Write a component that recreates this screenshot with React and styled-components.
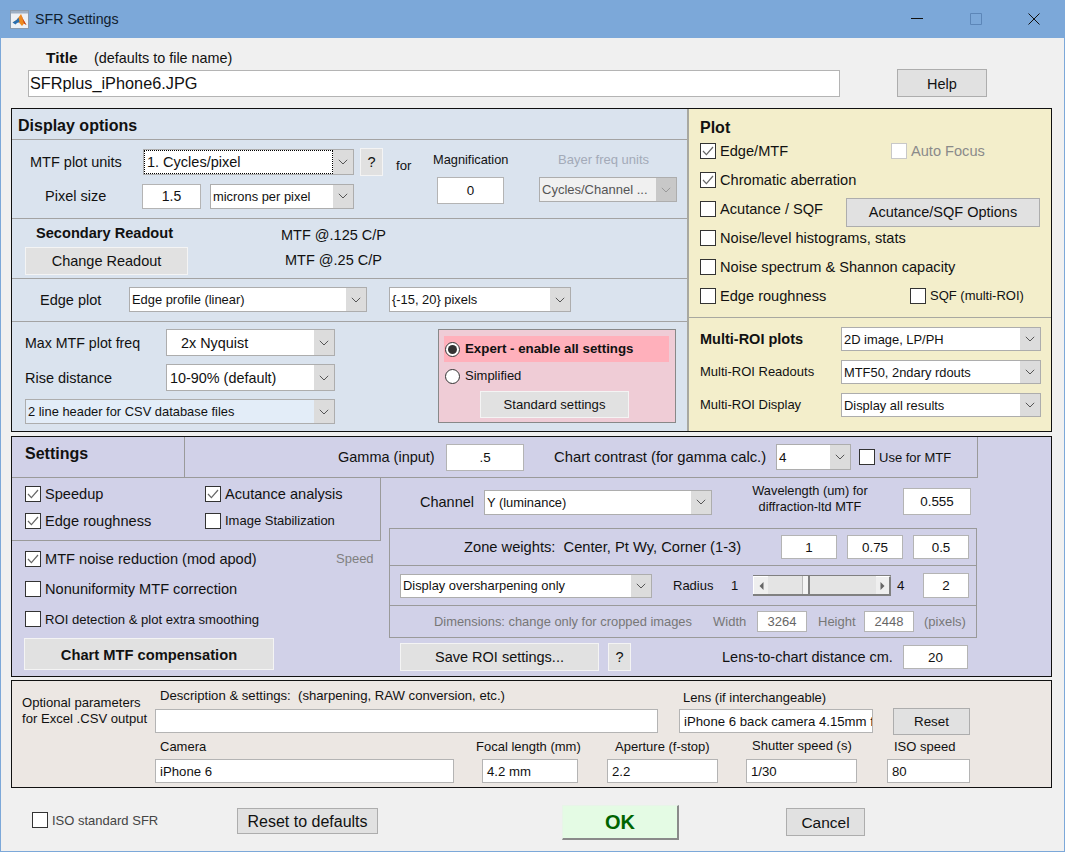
import React from 'react';
import styled, { createGlobalStyle, css } from 'styled-components';

const GlobalStyle = createGlobalStyle`
  html, body {
    margin: 0;
    padding: 0;
    background: #f0f0f0;
    font-family: "Liberation Sans", Arial, sans-serif;
    color: #111;
  }
  * { box-sizing: border-box; }
`;

// every control in this dialog has a fixed size, and an offset from its neighbour
const spot = css`
  flex: none;
  margin-left: ${p => p.$ml || 0}px;
  margin-top: ${p => p.$mt || 0}px;
  ${p => p.$w && `width: ${p.$w}px;`}
  ${p => p.$h && `height: ${p.$h}px;`}
`;

const Window = styled.div`
  width: 1065px;
  height: 852px;
  overflow: hidden;
  background: #f0f0f0;
  border: 1px solid #7ca8d9;
  border-top: 0;
`;

const TitleBar = styled.div`
  height: 38px;
  margin: 0 -1px;
  padding: 0 25px 0 10px;
  display: flex;
  align-items: center;
  background: #7ca8d9;
  font-size: 14.2px;
  color: #10202f;
`;

const TitleText = styled.span`
  margin-left: 6px;
`;

const WindowControls = styled.div`
  margin-left: auto;
  display: flex;
  align-items: center;
  gap: 46.5px;
`;

const Row = styled.div`
  display: flex;
  align-items: ${p => p.$align || 'center'};
  ${spot}
`;

const Col = styled.div`
  display: flex;
  flex-direction: column;
  align-items: flex-start;
  ${spot}
`;

const Text = styled.span`
  display: block;
  ${spot}
  font-size: ${p => p.$size || 14.5}px;
  font-weight: ${p => (p.$bold ? 700 : 400)};
  color: ${p => p.$color || '#111'};
  text-align: ${p => p.$align || 'left'};
  line-height: ${p => p.$lh || 18}px;
  white-space: pre;
`;

const Field = styled.div`
  ${spot}
  display: flex;
  align-items: center;
  justify-content: ${p => (p.$left ? 'flex-start' : 'center')};
  padding-left: ${p => (p.$left ? p.$pad ?? 4 : 0)}px;
  overflow: hidden;
  background: #fff;
  border: 1px solid #b4b4b4;
  font-size: ${p => p.$size || 13.4}px;
  color: ${p => p.$color || '#111'};
  white-space: nowrap;
`;

const Button = styled.div`
  ${spot}
  display: flex;
  align-items: center;
  justify-content: center;
  padding-top: ${p => p.$pt || 0}px;
  background: #e1e1e1;
  border: 1px solid ${p => (p.$light ? '#f4f4f4' : '#adadad')};
  font-size: ${p => p.$size || 14.5}px;
  font-weight: ${p => (p.$bold ? 700 : 400)};
  color: #111;
  white-space: nowrap;
`;

const OkButton = styled(Button)`
  background: #e4fbe4;
  border: 1px solid #e8f4e8;
  border-right: 2px solid #8a8a8a;
  border-bottom: 2px solid #8a8a8a;
  font-size: 20px;
  font-weight: 700;
  color: #006400;
`;

const SelectBox = styled.div`
  ${spot}
  display: flex;
  background: ${p => (p.$disabled ? '#f0f0f0' : p.$bg || '#fff')};
  border: 1px solid #adadad;
  font-size: ${p => p.$size || 12.9}px;
  color: ${p => (p.$disabled ? '#555' : '#111')};
  white-space: nowrap;
`;

const SelectValue = styled.div`
  flex: 1;
  min-width: 0;
  display: flex;
  align-items: center;
  padding-left: ${p => p.$pad ?? 2}px;
  ${p => p.$focus && 'outline: 1px dotted #000; outline-offset: -1px;'}
`;

const SelectArrow = styled.div`
  flex: none;
  width: 20px;
  display: flex;
  align-items: center;
  justify-content: center;
  background: ${p => (p.$disabled ? '#c8c8c8' : '#dcdcdc')};
`;

const Select = ({ children, pad, focus, ...rest }) => (
  <SelectBox {...rest}>
    <SelectValue $pad={pad} $focus={focus}>{children}</SelectValue>
    <SelectArrow $disabled={rest.$disabled}>
      <svg width="10" height="6" viewBox="0 0 10 6" fill="none" stroke={rest.$disabled ? '#999' : '#555'}>
        <path d="M.8.8 5 5 9.2.8" />
      </svg>
    </SelectArrow>
  </SelectBox>
);

const CheckItem = styled.div`
  ${spot}
  display: flex;
  align-items: center;
  gap: 4px;
  font-size: ${p => p.$size || 14.6}px;
  color: ${p => p.$color || '#111'};
  white-space: nowrap;
`;

const CheckBox = styled.div`
  flex: none;
  width: 16px;
  height: 16px;
  display: flex;
  align-items: center;
  justify-content: center;
  background: #fff;
  border: 1px solid ${p => (p.$off ? '#c8c8c8' : '#333')};
`;

const Check = ({ on, off, children, ...rest }) => (
  <CheckItem {...rest}>
    <CheckBox $off={off}>
      {on && (
        <svg width="12" height="10" viewBox="0 0 12 10" fill="none" stroke="#666" strokeWidth="1.2">
          <path d="M1 5l3.400 3.600L11 1" />
        </svg>
      )}
    </CheckBox>
    {children}
  </CheckItem>
);

const RadioCircle = styled.div`
  flex: none;
  width: 15px;
  height: 15px;
  display: flex;
  align-items: center;
  justify-content: center;
  border-radius: 50%;
  background: #fff;
  border: 1px solid #333;
`;

const RadioDot = styled.div`
  width: 9px;
  height: 9px;
  border-radius: 50%;
  background: #333;
`;

const Panel = styled.div`
  ${spot}
  width: 1041px;
  border: 1px solid #111;
  background: ${p => p.$bg};
`;

const DisplayGrid = styled.div`
  display: grid;
  grid-template-columns: 675px 1fr;
  height: 322px;
`;

const DisplayArea = styled.div`
  background: #dae3ee;
`;

const Section = styled.div`
  display: flex;
  align-items: flex-start;
  height: ${p => p.$h}px;
  ${p => !p.$last && 'border-bottom: 1px solid #a3a3a3;'}
`;

const PlotArea = styled.div`
  background: #f3eecb;
  border-left: 2px solid #a8a8a0;
`;

const PlotChecks = styled.div`
  height: 209px;
  padding: 9px 0 0 11px;
  border-bottom: 1px solid #a8a8a0;
`;

const PlotRow = styled.div`
  display: flex;
  align-items: center;
  height: 29px;
`;

const PlotSelects = styled.div`
  padding: 9px 0 0 11px;
`;

const ExpertBox = styled.div`
  ${spot}
  width: 238px;
  height: 94px;
  padding: 6px 0 0 5px;
  background: #efccd6;
  border: 1px solid #888;
`;

const ExpertStrip = styled.div`
  display: flex;
  align-items: center;
  gap: 5px;
  width: 225px;
  height: 26px;
  padding-left: 1px;
  background: ${p => (p.$on ? '#ffb0bb' : 'transparent')};
  ${p => !p.$on && 'margin-top: 4px; height: 20px;'}
`;

const TopRow = styled.div`
  display: flex;
  width: 966px;
  height: 41px;
  border-bottom: 1px solid #9a9a9a;
`;

const SettingsHead = styled.div`
  width: 173px;
  padding: 7px 0 0 13px;
  border-right: 1px solid #9a9a9a;
`;

const GammaBar = styled.div`
  flex: 1;
  display: flex;
  align-items: center;
  border-right: 1px solid #9a9a9a;
`;

const SettingsBody = styled.div`
  display: flex;
  align-items: flex-start;
`;

const CheckGroup = styled.div`
  display: grid;
  grid-template-columns: 180px 1fr;
  grid-auto-rows: 27px;
  align-items: center;
  width: 369px;
  height: 63px;
  padding: 2px 0 0 13px;
  border-right: 1px solid #9a9a9a;
  border-bottom: 1px solid #9a9a9a;
`;

const LeftRows = styled.div`
  padding: 3px 0 0 13px;
`;

const OptionRow = styled.div`
  display: flex;
  align-items: center;
  height: 30px;
`;

const ZoneBox = styled.div`
  ${spot}
  width: 588px;
  border: 1px solid #9a9a9a;
`;

const ZoneRow = styled.div`
  display: flex;
  align-items: center;
  height: ${p => p.$h}px;
  ${p => !p.$last && 'border-bottom: 1px solid #9a9a9a;'}
`;

const Slider = styled.div`
  ${spot}
  display: flex;
  align-items: stretch;
  background: #e4e4e4;
  border-top: 1px solid #808080;
  border-bottom: 2px solid #808080;
`;

const SliderArrow = styled.div`
  width: 15px;
  flex: none;
  display: flex;
  align-items: center;
  justify-content: center;
  background: #efefef;
  border-top: 1px solid #fff;
  ${p => (p.$end ? 'border-right: 2px solid #808080;' : 'border-left: 1px solid #fff;')}
`;

const SliderThumb = styled.div`
  width: 8px;
  flex: none;
  margin-left: 34px;
  background: #f4f4f4;
  border-left: 1px solid #bbb;
  border-right: 2px solid #808080;
`;

const SliderRest = styled.div`
  flex: 1;
`;

const OptionalLead = styled.div`
  width: 143px;
  flex: none;
  padding: 14px 0 0 10px;
`;

const Footer = styled.div`
  display: flex;
  align-items: flex-start;
  margin-top: 17px;
`;

const MatlabIcon = () => (
  <svg width="19" height="19" viewBox="0 0 19 19">
    <rect x=".5" y=".5" width="18" height="18" fill="#eef1f5" stroke="#8b9bad" />
    <rect x="1" y="1" width="17" height="2.500" fill="#9fb0c4" />
    <path d="M2.500 12.500l4-2.500 2-2.500 2.500-3.500 2 5 3.500 6-2.500-1.500-2 2.500-3-3.500-2-.5z" fill="#ee8a1e" />
    <path d="M2.500 12.500l4-2.500 2-2.500 1 4.500-2.500 1-1.500 1.500z" fill="#2a6fb0" />
    <path d="M11 4l2 5 3.500 6-2.500-1.500-1.500-5z" fill="#c8401a" />
  </svg>
);

const Minimize = () => (
  <svg width="12" height="12" viewBox="0 0 12 12" stroke="#111"><path d="M0 5.500h12" /></svg>
);
const Maximize = () => (
  <svg width="12" height="12" viewBox="0 0 12 12" fill="none" stroke="#5c86b8"><path d="M.5.500h11v11H.5z" /></svg>
);
const Close = () => (
  <svg width="12" height="12" viewBox="0 0 12 12" stroke="#111"><path d="M.5.500l11 11M11.500.500l-11 11" /></svg>
);

const LabeledField = ({ label, labelSize = 13, labelMl, labelMt = 0, fieldMt = 3, w, ml, value }) => (
  <Col $ml={ml} $w={w}>
    <Text $size={labelSize} $lh={16} $ml={labelMl} $mt={labelMt}>{label}</Text>
    <Field $w={w} $h={24} $mt={fieldMt} $left $size={13.2}>{value}</Field>
  </Col>
);

const App = () => {
  return (
    <Window>
      <GlobalStyle />
      <TitleBar>
        <MatlabIcon />
        <TitleText>SFR Settings</TitleText>
        <WindowControls>
          <Minimize />
          <Maximize />
          <Close />
        </WindowControls>
      </TitleBar>

      <Row $mt={10} $ml={45} $h={20}>
        <Text $size={15.5} $bold $w={48}>Title</Text>
        <Text $size={14.4}>(defaults to file name)</Text>
      </Row>
      <Row $mt={1} $ml={27} $h={28}>
        <Field $w={812} $h={27} $mt={1} $left $pad={1} $size={16.3}>SFRplus_iPhone6.JPG</Field>
        <Button $ml={57} $w={90} $h={28} $pt={1}>Help</Button>
      </Row>

      <Panel $ml={10} $mt={11} $bg="#dae3ee">
        <DisplayGrid>
          <DisplayArea>
            <Section $h={31}>
              <Text $size={16} $bold $lh={20} $ml={6} $mt={7}>Display options</Text>
            </Section>

            <Section $h={79}>
              <Col $w={371} $mt={8}>
                <Row $h={28}>
                  <Text $ml={18} $w={113}>MTF plot units</Text>
                  <Select $w={211} $h={26} focus pad={3} $size={14.5}>1. Cycles/pixel</Select>
                  <Button $light $ml={6} $w={23} $h={28}>?</Button>
                </Row>
                <Row $h={26} $mt={7}>
                  <Text $ml={33} $w={97}>Pixel size</Text>
                  <Field $w={59} $h={25} $size={14}>1.5</Field>
                  <Select $ml={9} $w={144} $h={25}>microns per pixel</Select>
                </Row>
              </Col>
              <Text $size={13.2} $ml={13} $mt={17} $w={14}>for</Text>
              <Col $ml={23} $w={76} $mt={12}>
                <Text $size={12.8} $lh={16}>Magnification</Text>
                <Field $ml={4} $mt={9} $w={67} $h={27}>0</Field>
              </Col>
              <Col $ml={30} $w={138} $mt={12}>
                <Text $size={13} $lh={16} $ml={19} $color="#a3aab8">Bayer freq units</Text>
                <Select $mt={9} $w={138} $h={25} $disabled $size={13}>Cycles/Channel ...</Select>
              </Col>
            </Section>

            <Section $h={60}>
              <Col $w={269} $mt={5}>
                <Text $bold $size={14.6} $ml={24}>Secondary Readout</Text>
                <Button $light $ml={13} $mt={5} $w={163} $h={28}>Change Readout</Button>
              </Col>
              <Col $mt={7}>
                <Text>MTF @.125 C/P</Text>
                <Text $ml={4} $mt={7}>MTF @.25 C/P</Text>
              </Col>
            </Section>

            <Section $h={43}>
              <Row $mt={8} $h={25}>
                <Text $ml={28} $w={89}>Edge plot</Text>
                <Select $w={238} $h={25}>Edge profile (linear)</Select>
                <Select $ml={22} $w={182} $h={25}>{'{-15, 20} pixels'}</Select>
              </Row>
            </Section>

            <Section $h={109} $last>
              <Col $w={426} $mt={7}>
                <Row $ml={13} $h={27}>
                  <Text $size={14.2} $w={141}>Max MTF plot freq</Text>
                  <Select $w={169} $h={27} $size={14.4} pad={14}>2x Nyquist</Select>
                </Row>
                <Row $ml={13} $mt={8} $h={27}>
                  <Text $w={141}>Rise distance</Text>
                  <Select $w={169} $h={27} $size={14.4} pad={3}>10-90% (default)</Select>
                </Row>
                <Select $ml={13} $mt={8} $w={310} $h={25} $bg="#e3edf8">2 line header for CSV database files</Select>
              </Col>
              <ExpertBox $mt={7}>
                <ExpertStrip $on>
                  <RadioCircle><RadioDot /></RadioCircle>
                  <Text $size={13.3} $bold>Expert - enable all settings</Text>
                </ExpertStrip>
                <ExpertStrip>
                  <RadioCircle />
                  <Text $size={13}>Simplified</Text>
                </ExpertStrip>
                <Button $light $ml={36} $mt={5} $w={149} $h={27} $size={13.1}>Standard settings</Button>
              </ExpertBox>
            </Section>
          </DisplayArea>

          <PlotArea>
            <PlotChecks>
              <Text $size={16} $bold $lh={17} $mt={1}>Plot</Text>
              <PlotRow>
                <Check on $w={191}>Edge/MTF</Check>
                <Check off $color="#8a8a8a">Auto Focus</Check>
              </PlotRow>
              <PlotRow><Check on>Chromatic aberration</Check></PlotRow>
              <PlotRow>
                <Check $w={146}>Acutance / SQF</Check>
                <Button $mt={7} $w={194} $h={29}>Acutance/SQF Options</Button>
              </PlotRow>
              <PlotRow><Check>Noise/level histograms, stats</Check></PlotRow>
              <PlotRow><Check>Noise spectrum &amp; Shannon capacity</Check></PlotRow>
              <PlotRow>
                <Check $w={210}>Edge roughness</Check>
                <Check $size={13}>SQF (multi-ROI)</Check>
              </PlotRow>
            </PlotChecks>
            <PlotSelects>
              <Row $h={24}>
                <Text $bold $w={141}>Multi-ROI plots</Text>
                <Select $w={200} $h={24}>2D image, LP/PH</Select>
              </Row>
              <Row $h={24} $mt={9}>
                <Text $size={13} $w={141}>Multi-ROI Readouts</Text>
                <Select $w={200} $h={24}>MTF50, 2ndary rdouts</Select>
              </Row>
              <Row $h={24} $mt={9}>
                <Text $size={13} $w={141}>Multi-ROI Display</Text>
                <Select $w={200} $h={24}>Display all results</Select>
              </Row>
            </PlotSelects>
          </PlotArea>
        </DisplayGrid>
      </Panel>

      <Panel $ml={10} $mt={4} $h={241} $bg="#d1d1e8">
        <TopRow>
          <SettingsHead><Text $size={16} $bold $lh={20}>Settings</Text></SettingsHead>
          <GammaBar>
            <Text $ml={153} $w={108}>Gamma (input)</Text>
            <Field $w={78} $h={27}>.5</Field>
            <Text $size={14.8} $ml={30} $w={222}>Chart contrast (for gamma calc.)</Text>
            <Select $w={75} $h={26} $size={13.4}>4</Select>
            <Check $ml={8} $size={13}>Use for MTF</Check>
          </GammaBar>
        </TopRow>
        <SettingsBody>
          <Col $w={369}>
            <CheckGroup>
              <Check on>Speedup</Check>
              <Check on>Acutance analysis</Check>
              <Check on>Edge roughness</Check>
              <Check $size={13}>Image Stabilization</Check>
            </CheckGroup>
            <LeftRows>
              <OptionRow>
                <Check on $w={311}>MTF noise reduction (mod apod)</Check>
                <Text $size={13} $color="#808080">Speed</Text>
              </OptionRow>
              <OptionRow><Check>Nonuniformity MTF correction</Check></OptionRow>
              <OptionRow><Check $size={13.1}>ROI detection &amp; plot extra smoothing</Check></OptionRow>
              <Button $light $bold $ml={-1} $mt={4} $w={250} $h={32} $size={14.7} $pt={1}>Chart MTF compensation</Button>
            </LeftRows>
          </Col>
          <Col>
            <Row $mt={10} $h={27}>
              <Text $ml={39} $w={64}>Channel</Text>
              <Select $w={228} $h={25} $mt={1}>Y (luminance)</Select>
              <Text $size={12.8} $lh={16} $ml={40} $w={116} $mt={-5} $align="center">{'Wavelength (um) for\ndiffraction-ltd MTF'}</Text>
              <Field $ml={35} $w={68} $h={27}>0.555</Field>
            </Row>
            <ZoneBox $ml={8} $mt={13}>
              <ZoneRow $h={37}>
                <Text $size={14.7} $ml={74} $w={317}>Zone weights:  Center, Pt Wy, Corner (1-3)</Text>
                <Field $w={56} $h={24}>1</Field>
                <Field $ml={10} $w={56} $h={24}>0.75</Field>
                <Field $ml={10} $w={56} $h={24}>0.5</Field>
              </ZoneRow>
              <ZoneRow $h={40}>
                <Select $ml={10} $w={252} $h={24}>Display oversharpening only</Select>
                <Text $size={13} $ml={21} $w={58}>Radius</Text>
                <Text $size={13} $w={22}>1</Text>
                <Slider $w={138} $h={21}>
                  <SliderArrow>
                    <svg width="5" height="8" viewBox="0 0 5 8" fill="#666"><path d="M4.500 0v8L.5 4z" /></svg>
                  </SliderArrow>
                  <SliderThumb />
                  <SliderRest />
                  <SliderArrow $end>
                    <svg width="5" height="8" viewBox="0 0 5 8" fill="#666"><path d="M.5 0v8l4-4z" /></svg>
                  </SliderArrow>
                </Slider>
                <Text $size={13.4} $ml={6} $w={26}>4</Text>
                <Field $w={46} $h={25}>2</Field>
              </ZoneRow>
              <ZoneRow $h={31} $last>
                <Text $size={12.9} $ml={44} $w={279} $color="#777">Dimensions: change only for cropped images</Text>
                <Text $size={13} $w={44} $color="#777">Width</Text>
                <Field $w={50} $h={21} $size={13} $color="#666">3264</Field>
                <Text $size={13} $ml={11} $w={46} $color="#777">Height</Text>
                <Field $w={50} $h={21} $size={13} $color="#666">2448</Field>
                <Text $size={13} $ml={10} $color="#777">(pixels)</Text>
              </ZoneRow>
            </ZoneBox>
            <Row $ml={19} $mt={5} $h={28}>
              <Button $light $w={199} $h={28}>Save ROI settings...</Button>
              <Button $light $ml={9} $w={23} $h={28}>?</Button>
              <Text $ml={91} $w={181}>Lens-to-chart distance cm.</Text>
              <Field $w={65} $h={24}>20</Field>
            </Row>
          </Col>
        </SettingsBody>
      </Panel>

      <Panel $ml={10} $mt={3} $h={108} $bg="#ece7e3">
        <Row $align="flex-start">
          <OptionalLead>
            <Text $size={13.1} $lh={16}>{'Optional parameters\nfor Excel .CSV output'}</Text>
          </OptionalLead>
          <Col>
            <Row $align="flex-start" $mt={6}>
              <LabeledField w={503} labelSize={13.15} label="Description &amp; settings:  (sharpening, RAW conversion, etc.)" labelMl={5} labelMt={1} fieldMt={5} />
              <LabeledField ml={21} w={194} label="Lens (if interchangeable)" labelMl={4} labelMt={3} fieldMt={3} value="iPhone 6 back camera 4.15mm f" />
              <Button $ml={20} $mt={21} $w={77} $h={27} $size={13.4}>Reset</Button>
            </Row>
            <Row $align="flex-start" $mt={5}>
              <LabeledField w={299} label="Camera" labelMl={5} labelMt={-1} fieldMt={4} value="iPhone 6" />
              <LabeledField ml={28} w={96} label="Focal length (mm)" labelMl={-6} labelMt={-1} fieldMt={4} value="4.2 mm" />
              <LabeledField ml={29} w={111} label="Aperture (f-stop)" labelMl={8} labelMt={-1} fieldMt={4} value="2.2" />
              <LabeledField ml={28} w={111} label="Shutter speed (s)" labelMl={6} labelMt={-2} fieldMt={5} value="1/30" />
              <LabeledField ml={30} w={83} label="ISO speed" labelMl={7} labelMt={-1} fieldMt={4} value="80" />
            </Row>
          </Col>
        </Row>
      </Panel>

      <Footer>
        <Check $ml={31} $mt={7} $w={205} $size={13} $color="#444">ISO standard SFR</Check>
        <Button $mt={3} $w={141} $h={26} $size={16} $pt={2}>Reset to defaults</Button>
        <OkButton $ml={184} $w={117} $h={35}>OK</OkButton>
        <Button $ml={107} $mt={3} $w={79} $h={28} $size={15.5} $pt={1}>Cancel</Button>
      </Footer>
    </Window>
  );
};

export default App;
